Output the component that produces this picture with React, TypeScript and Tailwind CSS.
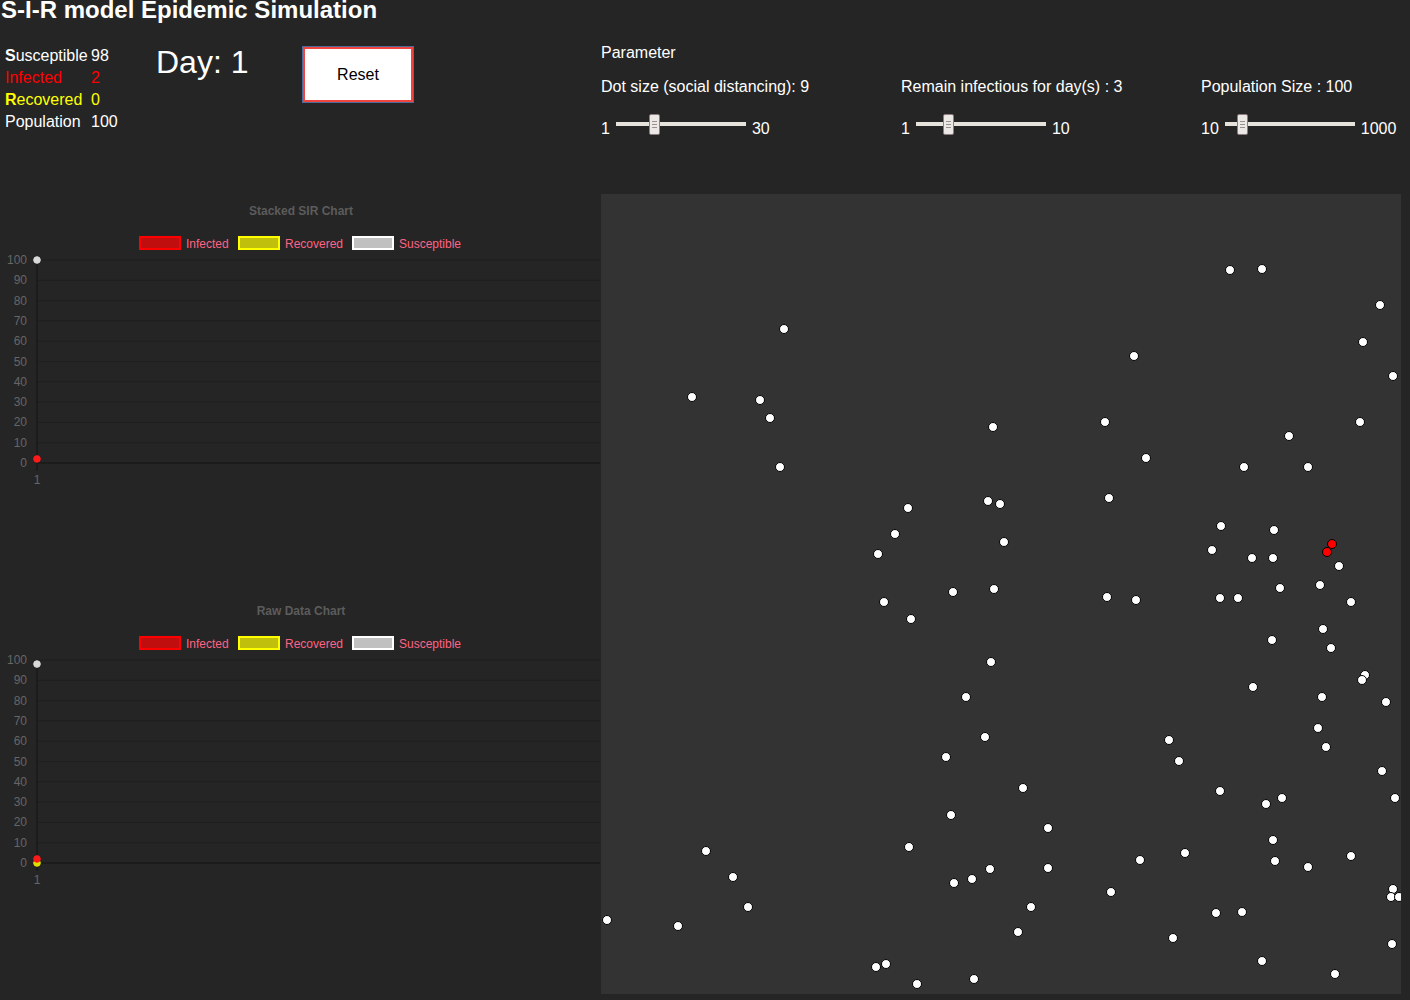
import React from "react";

// absolute page coordinates of the dots, as seen in the canvas
const dots: [number, number][] = [
  [784, 329], [692, 397], [760, 400], [770, 418], [780, 467], [993, 427], [908, 508], [895, 534],
  [878, 554], [988, 501], [1000, 504], [1004, 542], [884, 602], [911, 619], [953, 592], [994, 589],
  [991, 662], [966, 697], [985, 737], [946, 757], [1023, 788], [951, 815], [1048, 828], [909, 847],
  [990, 869], [972, 879], [954, 883], [1048, 868], [1031, 907], [1018, 932], [876, 967], [886, 964],
  [917, 984], [974, 979], [706, 851], [733, 877], [748, 907], [678, 926], [607, 920], [1230, 270],
  [1262, 269], [1380, 305], [1363, 342], [1393, 376], [1134, 356], [1105, 422], [1146, 458], [1289, 436],
  [1360, 422], [1244, 467], [1308, 467], [1109, 498], [1221, 526], [1274, 530], [1212, 550], [1252, 558],
  [1273, 558], [1339, 566], [1280, 588], [1320, 585], [1107, 597], [1136, 600], [1220, 598], [1238, 598],
  [1351, 602], [1323, 629], [1272, 640], [1331, 648], [1253, 687], [1322, 697], [1365, 675], [1362, 680],
  [1386, 702], [1318, 728], [1326, 747], [1169, 740], [1179, 761], [1382, 771], [1220, 791], [1266, 804],
  [1282, 798], [1395, 798], [1273, 840], [1140, 860], [1185, 853], [1275, 861], [1308, 867], [1351, 856],
  [1111, 892], [1393, 889], [1391, 897], [1399, 897], [1216, 913], [1242, 912], [1173, 938], [1262, 961],
  [1335, 974], [1392, 944],
];
const infected: [number, number][] = [
  [1332, 544], [1327, 552],
];

const legend = [
  { label: "Infected", fill: "#c00d0d", stroke: "#ff0000", bx: 140, tx: 186 },
  { label: "Recovered", fill: "#c0c00c", stroke: "#ffff00", bx: 239, tx: 285 },
  { label: "Susceptible", fill: "#c0c0c0", stroke: "#ffffff", bx: 353, tx: 399 },
];

function Chart({ title, points }: { title: string; points: { y: number; color: string }[] }) {
  const top = 65;
  const bottom = 268;
  const step = (bottom - top) / 10;
  return (
    <svg width="601" height="400" className="block" style={{ fontFamily: "'Liberation Sans', Arial, sans-serif" }}>
      <text x="301" y="20" textAnchor="middle" fontSize="12" fontWeight="bold" fill="#5c5c5c">
        {title}
      </text>
      {legend.map((l) => (
        <g key={l.label}>
          <rect x={l.bx} y="42" width="40" height="12" fill={l.fill} stroke={l.stroke} strokeWidth="2" />
          <text x={l.tx} y="53" fontSize="12" fill="#ff6384">
            {l.label}
          </text>
        </g>
      ))}
      {Array.from({ length: 11 }).map((_, i) => {
        const y = top + i * step;
        return (
          <g key={i}>
            <line x1="37" x2="600" y1={y} y2={y} stroke={i === 10 ? "#141414" : "#1f1f1f"} strokeWidth="1" />
            <text x="27" y={y + 4} textAnchor="end" fontSize="12" fill="#666">
              {100 - i * 10}
            </text>
          </g>
        );
      })}
      <line x1="37" x2="37" y1={top} y2={bottom + 8} stroke="#141414" strokeWidth="1" />
      <text x="37" y={bottom + 21} textAnchor="middle" fontSize="12" fill="#666">
        1
      </text>
      {points.map((p, i) => (
        <circle key={i} cx="37" cy={bottom - p.y * (step / 10)} r="3.3" fill={p.color} stroke={p.color} strokeWidth="1" />
      ))}
    </svg>
  );
}

function Slider({ min, max, value }: { min: string; max: string; value: number }) {
  return (
    <div className="flex items-start gap-[6px] h-5 text-base leading-5 text-white">
      <span>{min}</span>
      <div className="relative mt-[3px] h-[4px] w-[130px] bg-[#e6e2dc]">
        <div
          className="absolute top-[-8px] flex h-[21px] w-[11px] flex-col items-center justify-center gap-[2px] rounded-[2px] border border-[#8c7b80] bg-[#ece8e6]"
          style={{ left: `${value}px` }}
        >
          <span className="block h-px w-[5px] bg-[#9a9090]" />
          <span className="block h-px w-[5px] bg-[#9a9090]" />
          <span className="block h-px w-[5px] bg-[#9a9090]" />
        </div>
      </div>
      <span>{max}</span>
    </div>
  );
}

export default function App() {
  return (
    <div
      className="h-[1000px] w-full overflow-hidden bg-[#252525] text-white"
      style={{ fontFamily: "'Liberation Sans', Arial, sans-serif" }}
    >
      <h1 className="mt-[-2px] h-6 pl-[1px] text-2xl font-bold leading-6">S-I-R model Epidemic Simulation</h1>
      <div className="flex">
        <div className="w-[601px] shrink-0">
          <div className="flex h-[173px] items-start pl-[5px]">
            <div className="mt-[23px] grid w-[151px] grid-cols-[86px_auto] text-base leading-[22px]">
              <span>
                <b>S</b>usceptible
              </span>
              <span>98</span>
              <span className="text-[#ff0000]">Infected</span>
              <span className="text-[#ff0000]">2</span>
              <span className="text-[#ffff00]">
                <b>R</b>ecovered
              </span>
              <span className="text-[#ffff00]">0</span>
              <span>Population</span>
              <span>100</span>
            </div>
            <div className="mt-[24px] w-[147px] text-[32px] leading-8">Day: 1</div>
            <button className="mt-[25px] h-[55px] w-[110px] border-2 border-[#f0453f] bg-white text-base text-black outline outline-1 outline-[#4d6a9a]">
              Reset
            </button>
          </div>
          <Chart title="Stacked SIR Chart" points={[{ y: 100, color: "#d9d9d9" }, { y: 2, color: "#ff1a1a" }]} />
          <Chart
            title="Raw Data Chart"
            points={[{ y: 98, color: "#d9d9d9" }, { y: 0, color: "#e0e000" }, { y: 2, color: "#ff1a1a" }]}
          />
        </div>
        <div className="flex-1">
          <div className="mt-[21px] text-base leading-5">Parameter</div>
          <div className="mt-[14px] flex">
            <div className="w-[300px] shrink-0">
              <div className="text-base leading-5">Dot size (social distancing): 9</div>
              <div className="mt-[22px]">
                <Slider min="1" max="30" value={33} />
              </div>
            </div>
            <div className="w-[300px] shrink-0">
              <div className="text-base leading-5">Remain infectious for day(s) : 3</div>
              <div className="mt-[22px]">
                <Slider min="1" max="10" value={27} />
              </div>
            </div>
            <div className="w-[209px] shrink-0 whitespace-nowrap">
              <div className="text-base leading-5">Population Size : 100</div>
              <div className="mt-[22px]">
                <Slider min="10" max="1000" value={12} />
              </div>
            </div>
          </div>
          <div className="mt-[55px] h-[800px] w-[800px] bg-[#333333]">
            <svg width="800" height="800" className="block">
              {dots.map(([x, y], i) => (
                <circle key={i} cx={x - 601} cy={y - 194} r="4.5" fill="#ffffff" stroke="#000000" strokeWidth="1" />
              ))}
              {infected.map(([x, y], i) => (
                <circle key={i} cx={x - 601} cy={y - 194} r="4.5" fill="#ff0000" stroke="#000000" strokeWidth="1" />
              ))}
            </svg>
          </div>
        </div>
      </div>
    </div>
  );
}
